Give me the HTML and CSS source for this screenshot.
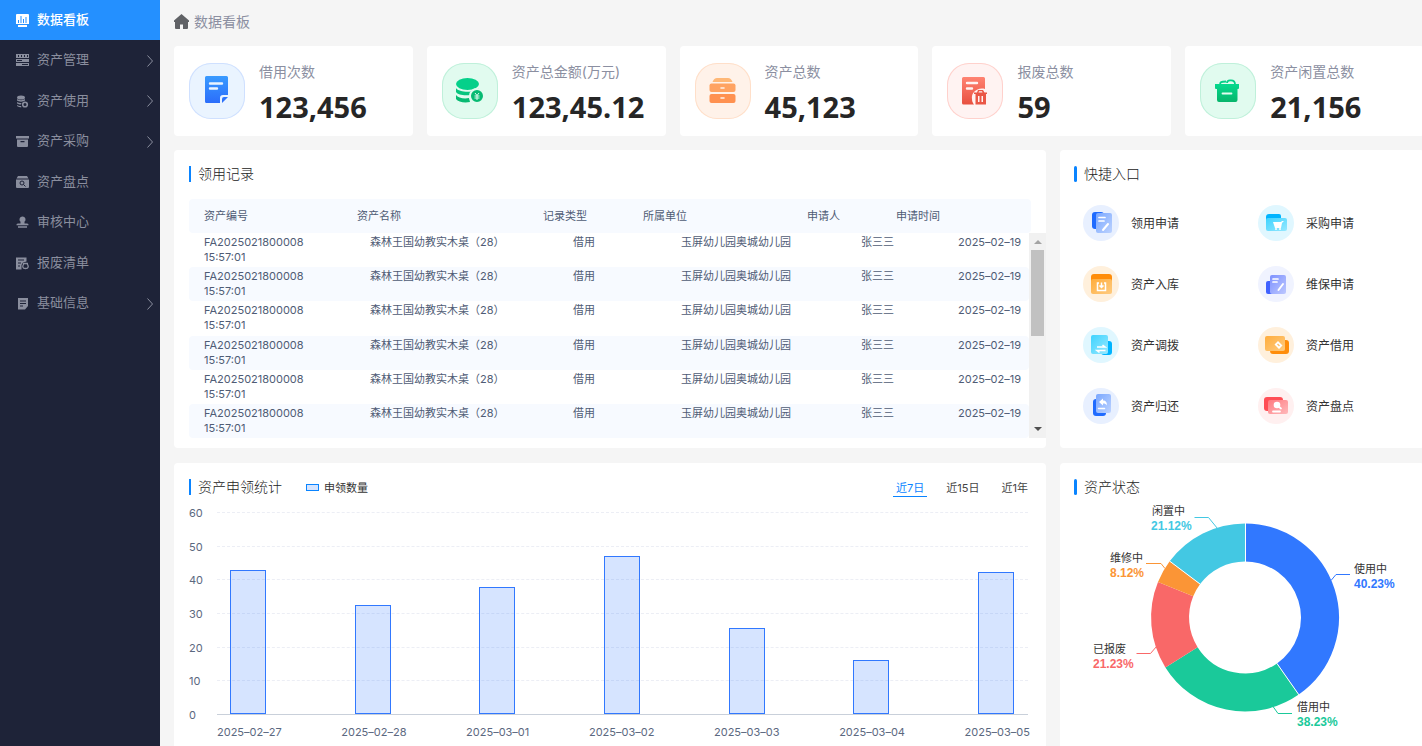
FILE: index.html
```html
<!DOCTYPE html>
<html lang="zh-CN">
<head>
    <meta charset="UTF-8">
    <meta name="viewport" content="width=device-width, initial-scale=1.0">
    <title>数据看板</title>
    <link rel="stylesheet" href="styles.css">
</head>
<body>

    <!-- Side menu -->
    <nav class="sidebar">
        <a class="menu-item active" href="#">
            <svg class="menu-icon" viewBox="0 0 13 13"><path fill="currentColor" fill-rule="evenodd" d="M0 1a1 1 0 0 1 1-1h11a1 1 0 0 1 1 1v9H0zM2 6v3h1V6zM4.500 2v7h1V2zM7 5v4h1V5zM9.500 3v6h1V3zM2 11h9v2H2z"/></svg>
            <span>数据看板</span>
        </a>
        <a class="menu-item" href="#">
            <svg class="menu-icon" viewBox="0 0 13 13"><path fill="currentColor" fill-rule="evenodd" d="M0 0h13v4H0zM2 1v2h1V1zM5 1v2h1V1zM8 1v2h1V1zM11 1v2h1V1zM0 5h13v3H0zM1 6v1h5V6zM0 9h13v3H0zM6 10v1h6v-1z"/></svg>
            <span>资产管理</span>
            <svg class="chevron" viewBox="0 0 6 12"><path d="M.5.5 5.500 6 .5 11.500"/></svg>
        </a>
        <a class="menu-item" href="#">
            <svg class="menu-icon" viewBox="0 0 13 13"><g fill="currentColor"><ellipse cx="5" cy="2.500" rx="4" ry="2"/><path d="M1 4c2 1.500 6 1.500 8 0v1.500C7 7 3 7 1 5.500zM1 7c1 .8 2.500 1 4.500 1L5 9.500C3.500 9.500 2 9 1 8.500zM1 10c1 .7 2.500 1 4 1l.5 1.200C4 12.200 2 12 1 11z"/></g><circle cx="9" cy="9.500" r="2.300" fill="none" stroke="currentColor" stroke-width="1.600"/></svg>
            <span>资产使用</span>
            <svg class="chevron" viewBox="0 0 6 12"><path d="M.5.5 5.500 6 .5 11.500"/></svg>
        </a>
        <a class="menu-item" href="#">
            <svg class="menu-icon" viewBox="0 0 13 13"><path fill="currentColor" fill-rule="evenodd" d="M0 1h13v2.500H0zM1 4.500h11V11a1 1 0 0 1-1 1H2a1 1 0 0 1-1-1zM4.500 6v1.200h4V6z"/></svg>
            <span>资产采购</span>
            <svg class="chevron" viewBox="0 0 6 12"><path d="M.5.5 5.500 6 .5 11.500"/></svg>
        </a>
        <a class="menu-item" href="#">
            <svg class="menu-icon" viewBox="0 0 13 13"><path fill="currentColor" d="M2 0h9l1.500 2.500H.5zM0 3.500h13V11a1 1 0 0 1-1 1H1a1 1 0 0 1-1-1z"/><g fill="none" stroke="#1e2338"><circle cx="6" cy="7" r="2"/><path d="m7.500 8.500 2 2"/></g></svg>
            <span>资产盘点</span>
        </a>
        <a class="menu-item" href="#">
            <svg class="menu-icon" viewBox="0 0 13 13"><path fill="currentColor" d="M6.500.5a3 3 0 0 1 2 5.300V7.500H11a1.500 1.500 0 0 1 1.500 1.800H.5A1.500 1.500 0 0 1 2 7.500h2.500V5.800a3 3 0 0 1 2-5.300zM2 10.300h9v1.500H2z"/></svg>
            <span>审核中心</span>
        </a>
        <a class="menu-item" href="#">
            <svg class="menu-icon" viewBox="0 0 13 13"><path fill="currentColor" fill-rule="evenodd" d="M0 .5h10.500v4L7 5.500 5.500 8v4.500H0zM2 2.500v1h6v-1zM2 5.500v1h3v-1zM2 8.500v1h2v-1z"/><path d="M7 6.500h5M8 6.500c-2 3-1.500 5 1.500 5s3.500-2 1.500-5" fill="none" stroke="currentColor" stroke-width="1.300"/></svg>
            <span>报废清单</span>
        </a>
        <a class="menu-item" href="#">
            <svg class="menu-icon" viewBox="0 0 13 13"><path fill="currentColor" fill-rule="evenodd" d="M2 1h10v8l-3 3.500H2zM4 3.500v1h6v-1zM4 6v1h6V6zM4 8.500v1h3v-1z"/></svg>
            <span>基础信息</span>
            <svg class="chevron" viewBox="0 0 6 12"><path d="M.5.5 5.500 6 .5 11.500"/></svg>
        </a>
    </nav>

    <main class="main">
        <header class="page-header">
            <svg class="home-icon" viewBox="0 0 15 15"><path fill="#606266" d="M7.500 0 15 6.500V8h-1v6a1 1 0 0 1-1 1H9v-4.500H6V15H2a1 1 0 0 1-1-1V8H0V6.500z"/></svg>
            <span>数据看板</span>
        </header>

        <!-- Totals -->
        <section class="stats">
            <div class="stat">
                <svg class="stat-icon blue" viewBox="0 0 56 56">
                    <defs><linearGradient id="gBlue" x2="0" y2="1"><stop stop-color="#3a9bff"/><stop offset="1" stop-color="#2b6dfb"/></linearGradient></defs>
                    <path fill="url(#gBlue)" d="M17.500 13h20a1.500 1.500 0 0 1 1.500 1.500V32h-5a3 3 0 0 0-3 3v5H17.500a1.500 1.500 0 0 1-1.500-1.500v-24a1.500 1.500 0 0 1 1.500-1.500zM33 40v-4a2 2 0 0 1 2-2h4z"/>
                    <path d="M21 20.500h12M21 25.500h7" stroke="#eaf4ff" stroke-width="2.400" stroke-linecap="round"/>
                </svg>
                <div class="stat-text">
                    <p class="stat-label">借用次数</p>
                    <p class="stat-value">123,456</p>
                </div>
            </div>
            <div class="stat">
                <svg class="stat-icon green" viewBox="0 0 56 56">
                    <defs><linearGradient id="gGreen" x2="0" y2="1"><stop stop-color="#05d98e"/><stop offset="1" stop-color="#07b56b"/></linearGradient></defs>
                    <ellipse cx="25.500" cy="21" rx="11.500" ry="6" fill="#05d08a"/>
                    <path fill="#07c57e" d="M14 25c3 5 20 5 23 0v3c-3 5-20 6-23 1z"/>
                    <path fill="#07ba72" d="M14 32c2 3 8 4 13 3l1 4c-6 1-12 0-14-3z"/>
                    <circle cx="35" cy="33" r="7" fill="#07ba72" stroke="#e1fbef" stroke-width="2"/>
                    <path d="m33 30 2 2.500 2-2.500M32.500 33h5M32.500 35h5M35 32.500V37" fill="none" stroke="#e1fbef"/>
                </svg>
                <div class="stat-text">
                    <p class="stat-label">资产总金额(万元)</p>
                    <p class="stat-value">123,45.12</p>
                </div>
            </div>
            <div class="stat">
                <svg class="stat-icon orange" viewBox="0 0 56 56">
                    <path fill="#ffb877" d="M17.500 19c1-2.500 2.500-4 4.500-4h11c2 0 3.500 1.500 4.500 4z"/>
                    <rect x="14.500" y="20.500" width="26" height="8.500" rx="2" fill="#ffa362"/>
                    <rect x="14.500" y="31" width="26" height="9" rx="2" fill="#ff9150"/>
                    <path d="M26 25h3M26 35h3" stroke="#fff2e9" stroke-width="1.600" stroke-linecap="round"/>
                </svg>
                <div class="stat-text">
                    <p class="stat-label">资产总数</p>
                    <p class="stat-value">45,123</p>
                </div>
            </div>
            <div class="stat">
                <svg class="stat-icon red" viewBox="0 0 56 56">
                    <defs><linearGradient id="gRed" x2="0" y2="1"><stop stop-color="#ff8372"/><stop offset="1" stop-color="#e8503f"/></linearGradient></defs>
                    <path fill="url(#gRed)" d="M16.500 14h20a1.500 1.500 0 0 1 1.500 1.500V26c-8-2-14 4-13 10 0 3 1 4 2 5.500H16.500A1.500 1.500 0 0 1 15 40V15.500a1.500 1.500 0 0 1 1.500-1.500z"/>
                    <path d="M20 20h10M20 25.500h5" stroke="#fff3f2" stroke-width="2.400" stroke-linecap="round"/>
                    <path fill="#ea5746" fill-rule="evenodd" d="M30 29.500 31 27h5l1.500 2.500H40V31h-1v10.500H28.500V31H27v-1.500zm1.500 0h4L35 28.300h-3zM31 33v6h1.500v-6zM34.500 33v6H36v-6z"/>
                </svg>
                <div class="stat-text">
                    <p class="stat-label">报废总数</p>
                    <p class="stat-value">59</p>
                </div>
            </div>
            <div class="stat">
                <svg class="stat-icon green" viewBox="0 0 56 56">
                    <path d="M20 22c0-3 1-3.500 6-3.500M27 20c0-2 1-2.700 3-2.700h1c3 0 4 1 4 4" fill="none" stroke="#06d08a" stroke-width="1.800"/>
                    <path fill="url(#gGreen)" d="M15 21h24v4a1 1 0 0 1-1 1h-.5v11a2 2 0 0 1-2 2H19a2 2 0 0 1-2-2V26h-1a1 1 0 0 1-1-1z"/>
                    <path d="M22.500 30.500h9" stroke="#e1fbef" stroke-width="1.800" stroke-linecap="round"/>
                </svg>
                <div class="stat-text">
                    <p class="stat-label">资产闲置总数</p>
                    <p class="stat-value">21,156</p>
                </div>
            </div>
        </section>

        <div class="panels">
            <!-- Records -->
            <section class="card records">
                <div class="card-head"><h2>领用记录</h2></div>
                <div class="record-wrap">
                    <table class="record-table">
                        <thead>
                            <tr><th>资产编号</th><th>资产名称</th><th>记录类型</th><th>所属单位</th><th>申请人</th><th>申请时间</th></tr>
                        </thead>
                        <tbody>
                            <tr><td>FA2025021800008</td><td>森林王国幼教实木桌（28）</td><td>借用</td><td>玉屏幼儿园奥城幼儿园</td><td>张三三</td><td>2025–02–19</td><td>15:57:01</td></tr>
                            <tr><td>FA2025021800008</td><td>森林王国幼教实木桌（28）</td><td>借用</td><td>玉屏幼儿园奥城幼儿园</td><td>张三三</td><td>2025–02–19</td><td>15:57:01</td></tr>
                            <tr><td>FA2025021800008</td><td>森林王国幼教实木桌（28）</td><td>借用</td><td>玉屏幼儿园奥城幼儿园</td><td>张三三</td><td>2025–02–19</td><td>15:57:01</td></tr>
                            <tr><td>FA2025021800008</td><td>森林王国幼教实木桌（28）</td><td>借用</td><td>玉屏幼儿园奥城幼儿园</td><td>张三三</td><td>2025–02–19</td><td>15:57:01</td></tr>
                            <tr><td>FA2025021800008</td><td>森林王国幼教实木桌（28）</td><td>借用</td><td>玉屏幼儿园奥城幼儿园</td><td>张三三</td><td>2025–02–19</td><td>15:57:01</td></tr>
                            <tr><td>FA2025021800008</td><td>森林王国幼教实木桌（28）</td><td>借用</td><td>玉屏幼儿园奥城幼儿园</td><td>张三三</td><td>2025–02–19</td><td>15:57:01</td></tr>
                        </tbody>
                    </table>
                    <div class="scrollbar">
                        <span class="arrow up"></span>
                        <span class="thumb"></span>
                        <span class="arrow down"></span>
                    </div>
                </div>
            </section>

            <!-- Shortcuts -->
            <section class="card side">
                <div class="card-head"><h2>快捷入口</h2></div>
                <div class="shortcuts">
                    <a class="shortcut" href="#">
                        <svg class="c-blue" viewBox="0 0 36 36">
                            <defs><linearGradient id="qBlue" x2="1" y2="1"><stop stop-color="#79a7ff"/><stop offset="1" stop-color="#bdd3ff"/></linearGradient></defs>
                            <rect x="9" y="7" width="12" height="17" rx="3" fill="#1f6bff"/><rect x="13" y="8" width="16" height="20" rx="2" fill="url(#qBlue)"/>
                            <path d="M16 12.500h6M16 16h5" stroke="#fff" stroke-width="1.700" stroke-linecap="round"/><path d="m20 25 5-6" stroke="#fff" stroke-width="2" stroke-linecap="round"/>
                        </svg>
                        <span>领用申请</span>
                    </a>
                    <a class="shortcut" href="#">
                        <svg class="c-cyan" viewBox="0 0 36 36">
                            <defs><linearGradient id="qCyan" x2="1" y2="1"><stop stop-color="#3ed3ff"/><stop offset="1" stop-color="#96e8ff"/></linearGradient></defs>
                            <path fill="#00b4ff" d="M8 12a3 3 0 0 1 3-3h10a2 2 0 0 1 2 2v6H8z"/><rect x="8" y="13" width="21" height="13" rx="2" fill="url(#qCyan)"/>
                            <path fill="#fff" d="M15 17h8l1-1h2l-2 2-1 5h-6z"/><circle cx="18" cy="24" r="1" fill="#fff"/><circle cx="22" cy="24" r="1" fill="#fff"/>
                        </svg>
                        <span>采购申请</span>
                    </a>
                    <a class="shortcut" href="#">
                        <svg class="c-orange" viewBox="0 0 36 36">
                            <defs><linearGradient id="qOrange" x2="1" y2="1"><stop stop-color="#ffad3c"/><stop offset="1" stop-color="#ffcb7f"/></linearGradient></defs>
                            <rect x="8" y="8" width="21" height="19" rx="3" fill="#ff8d0a"/><rect x="8" y="13" width="21" height="15" rx="2" fill="url(#qOrange)"/>
                            <path d="M16 17h-1.500v7.500h8V17H21M18.500 16.500V21M16.500 19.500l2 2 2-2" fill="none" stroke="#fff" stroke-width="1.500"/>
                        </svg>
                        <span>资产入库</span>
                    </a>
                    <a class="shortcut" href="#">
                        <svg class="c-violet" viewBox="0 0 36 36">
                            <defs><linearGradient id="qViolet" x2="1" y2="1"><stop stop-color="#7d91ff"/><stop offset="1" stop-color="#bdc8ff"/></linearGradient></defs>
                            <rect x="8" y="15" width="12" height="13" rx="2" fill="#4062ff"/><rect x="12" y="9" width="16" height="19" rx="2" fill="url(#qViolet)"/>
                            <path d="M15 13h5M15 16h4" stroke="#fff" stroke-width="1.700" stroke-linecap="round"/><path d="m20.500 24 4.500-6" stroke="#fff" stroke-width="2" stroke-linecap="round"/>
                        </svg>
                        <span>维保申请</span>
                    </a>
                    <a class="shortcut" href="#">
                        <svg class="c-cyan" viewBox="0 0 36 36">
                            <rect x="18" y="14" width="11" height="14" rx="3" fill="#00b4ff"/><rect x="8" y="8" width="17" height="19" rx="2" fill="url(#qCyan)"/>
                            <path d="M14 20h8l-2.500-2M22.500 23.500H14l2.500 2" fill="none" stroke="#fff" stroke-width="1.600"/>
                        </svg>
                        <span>资产调拨</span>
                    </a>
                    <a class="shortcut" href="#">
                        <svg class="c-orange" viewBox="0 0 36 36">
                            <rect x="12" y="13" width="19" height="14" rx="3" fill="#ff8d0a"/><rect x="7" y="9" width="20" height="15" rx="2" fill="url(#qOrange)"/>
                            <path fill="#fff" fill-rule="evenodd" d="m20 14 4.500 4.500L21 22l-4.500-4.500zm0 2.500-1 1 2 2 1-1z"/>
                        </svg>
                        <span>资产借用</span>
                    </a>
                    <a class="shortcut" href="#">
                        <svg class="c-blue" viewBox="0 0 36 36">
                            <rect x="10" y="11" width="13" height="17" rx="3" fill="#1f6bff"/><rect x="13" y="6" width="15" height="19" rx="2" fill="url(#qBlue)"/>
                            <path fill="#fff" d="m16 14 4-3.500v2c3 0 4 2 4 5-1-1.500-2-2-4-2v2z"/><path d="M15.500 20.500h6" stroke="#fff" stroke-width="1.500" stroke-linecap="round"/>
                        </svg>
                        <span>资产归还</span>
                    </a>
                    <a class="shortcut" href="#">
                        <svg class="c-red" viewBox="0 0 36 36">
                            <defs><linearGradient id="qRed" x2="1" y2="1"><stop stop-color="#ff7b80"/><stop offset="1" stop-color="#ffb9bb"/></linearGradient></defs>
                            <rect x="6" y="9" width="19" height="14" rx="3" fill="#ff4d55"/><rect x="10" y="12" width="20" height="14" rx="2" fill="url(#qRed)"/>
                            <circle cx="19" cy="17" r="3.300" fill="#fff"/><path d="m20 18 3 2.500M15 23.500h7" stroke="#fff" stroke-width="1.800" stroke-linecap="round"/>
                        </svg>
                        <span>资产盘点</span>
                    </a>
                </div>
            </section>

            <!-- Bar chart -->
            <section class="card">
                <div class="card-head">
                    <h2>资产申领统计</h2>
                    <span class="legend">申领数量</span>
                    <div class="tabs">
                        <button class="tab active" type="button">近7日</button>
                        <button class="tab" type="button">近15日</button>
                        <button class="tab" type="button">近1年</button>
                    </div>
                </div>
                <div class="chart">
                    <div class="y-axis">
                        <span>60</span><span>50</span><span>40</span><span>30</span><span>20</span><span>10</span><span>0</span>
                    </div>
                    <div class="plot">
                        <div class="grid-lines"><i></i><i></i><i></i><i></i><i></i><i></i><i></i></div>
                        <div class="bars">
                            <div class="bar" style="height: 71.3%"></div>
                            <div class="bar" style="height: 54%"></div>
                            <div class="bar" style="height: 62.9%"></div>
                            <div class="bar" style="height: 78.2%"></div>
                            <div class="bar" style="height: 42.6%"></div>
                            <div class="bar" style="height: 26.7%"></div>
                            <div class="bar" style="height: 70.3%"></div>
                        </div>
                    </div>
                    <div class="x-axis">
                        <span>2025–02–27</span><span>2025–02–28</span><span>2025–03–01</span><span>2025–03–02</span><span>2025–03–03</span><span>2025–03–04</span><span>2025–03–05</span>
                    </div>
                </div>
            </section>

            <!-- Donut chart -->
            <section class="card side">
                <div class="card-head"><h2>资产状态</h2></div>
                <svg class="donut" viewBox="0 0 362 246">
                    <g fill="none" stroke-width="38">
                        <path stroke="#3178ff" d="M185 42.500A75 75 0 0 1 227.900 179"/>
                        <path stroke="#1ac99a" d="M227.900 179A75 75 0 0 1 121.500 157.300"/>
                        <path stroke="#f96868" d="M121.500 157.300A75 75 0 0 1 115.600 89.200"/>
                        <path stroke="#fb9536" d="M115.600 89.200A75 75 0 0 1 124.900 72.700"/>
                        <path stroke="#43c8e3" d="M124.900 72.700A75 75 0 0 1 185 42.500"/>
                    </g>
                    <path stroke="#fff" d="M185.500 23v39M217 163.500l22 31.500M109.500 61l30.500 23"/>
                    <g fill="none">
                        <path stroke="#3178ff" d="M290 74.500h-14l-5 6"/>
                        <path stroke="#1ac99a" d="M232 213.500h-14l-5-7"/>
                        <path stroke="#f96868" d="M76.500 153.500h14l6-7"/>
                        <path stroke="#fb9536" d="M86 63.500h15l4 5"/>
                        <path stroke="#43c8e3" d="M134.500 17.500h14l9 11"/>
                    </g>
                    <g class="donut-name">
                        <text x="294" y="73">使用中</text>
                        <text x="237" y="211">借用中</text>
                        <text x="33" y="153">已报废</text>
                        <text x="50" y="62">维修中</text>
                        <text x="92" y="15">闲置中</text>
                    </g>
                    <g class="donut-value">
                        <text x="294" y="88" fill="#3178ff">40.23%</text>
                        <text x="237" y="226" fill="#1ac99a">38.23%</text>
                        <text x="33" y="168" fill="#f96868">21.23%</text>
                        <text x="50" y="77" fill="#fb9536">8.12%</text>
                        <text x="91" y="30" fill="#43c8e3">21.12%</text>
                    </g>
                </svg>
            </section>
        </div>
    </main>

</body>
</html>
```
FILE: styles.css
```css
* {
    box-sizing: border-box;
}

body {
    display: flex;
    height: 100vh;
    margin: 0;
    overflow: hidden;
    background-color: #f5f5f5;
    font-family: Inter, "Noto Sans CJK SC", sans-serif;
    font-size: 11px;
    font-weight: 400;
    color: #333;
}

a {
    color: inherit;
    text-decoration: none;
}

h2, p {
    margin: 0;
    font-weight: 400;
}

/* Side menu */
.sidebar {
    flex: 0 0 160px;
    background-color: #1e2338;
}

.menu-item {
    display: flex;
    align-items: center;
    height: 40px;
    padding: 0 7px 0 16px;
    font-size: 13px;
    color: #8a8e9e;
}

.menu-item:nth-child(even) {
    height: 41px;
}

.menu-item.active {
    background-color: #2490ff;
    font-weight: 500;
    color: #fff;
}

.menu-item span {
    padding-bottom: 4px;
}

.menu-icon {
    width: 13px;
    height: 13px;
    margin-right: 8px;
}

.chevron {
    width: 6px;
    height: 12px;
    margin-left: auto;
    fill: none;
    stroke: #8a8e9e;
}

/* Page area, the right column runs to the window edge */
.main {
    flex: 1;
    min-width: 0;
    padding-left: 14px;
    overflow: hidden;
}

.page-header {
    display: flex;
    align-items: center;
    gap: 5px;
    height: 46px;
    padding-bottom: 3px;
    font-size: 14px;
    color: #8b8fa1;
}

.page-header span {
    padding-bottom: 2px;
}

.home-icon {
    width: 15px;
    height: 15px;
}

.stats {
    display: grid;
    grid-template-columns: repeat(5, 1fr);
    gap: 14px;
    margin: 0 -2px 14px 0;
}

.stat {
    display: flex;
    align-items: center;
    gap: 14px;
    height: 90px;
    padding-left: 15px;
    border-radius: 4px;
    background-color: #fff;
}

.stat-icon {
    width: 56px;
    height: 56px;
    border-radius: 22px;
}

.stat-icon.blue {
    background-color: #eaf4ff;
    box-shadow: inset 0 0 0 1px #cfe0ff;
}

.stat-icon.green {
    background-color: #e1fbef;
    box-shadow: inset 0 0 0 1px #bff0da;
}

.stat-icon.orange {
    background-color: #fff2e9;
    box-shadow: inset 0 0 0 1px #ffdfc9;
}

.stat-icon.red {
    background-color: #fff3f2;
    box-shadow: inset 0 0 0 1px #ffd1cc;
}

.stat-text {
    padding-top: 7px;
}

.stat-label {
    font-size: 14px;
    line-height: 20px;
    color: #8b8fa1;
}

.stat-value {
    margin-top: 5px;
    font-family: "Noto Sans", sans-serif;
    font-size: 29px;
    font-weight: 700;
    line-height: 40px;
    color: #262626;
}

.panels {
    display: grid;
    grid-template-columns: 872fr 364fr;
    gap: 15px 14px;
    margin-right: -2px;
}

.card {
    min-width: 0;
    padding: 14px 15px 10px;
    border-radius: 4px;
    background-color: #fff;
}

.card.side {
    padding-left: 14px;
}

.card-head {
    display: flex;
    align-items: center;
    height: 20px;
    margin-bottom: 15px;
}

.card-head h2 {
    display: flex;
    align-items: center;
    gap: 7px;
    font-size: 14px;
    font-weight: 300;
    line-height: 20px;
    color: #222;
}

.card-head h2::before {
    content: "";
    width: 2px;
    height: 16px;
    background-color: #0a84ff;
}

.side .card-head h2::before {
    width: 3px;
    border-radius: 2px;
}

/* Records */
.record-wrap {
    display: grid;
    grid-template-columns: 1fr 17px;
    margin-right: -15px;
}

.record-table {
    display: block;
    color: #4f5c75;
}

.record-table thead,
.record-table tbody {
    display: block;
}

.record-table tr {
    display: grid;
    padding-left: 15px;
    border-radius: 4px;
}

.record-table th,
.record-table td {
    padding: 0;
    font-weight: 400;
    line-height: 15px;
    text-align: left;
    white-space: nowrap;
}

.record-table thead tr {
    grid-template-columns: 153fr 186fr 100fr 164fr 89fr 135fr;
    align-items: center;
    height: 34px;
    margin-right: -2px;
    background-color: #f7faff;
}

.record-table tbody {
    display: flex;
    flex-direction: column;
    height: 205px;
}

.record-table tbody tr {
    flex: 1;
    grid-template-columns: 166fr 203fr 108fr 180fr 97fr 71fr;
    align-content: start;
    padding-top: 2px;
}

.record-table tbody tr:nth-child(even) {
    background-color: #f7faff;
}

.scrollbar {
    display: flex;
    flex-direction: column;
    align-items: center;
    justify-content: space-between;
    height: 205px;
    margin-top: 34px;
    padding: 7px 0;
    background-color: #f1f1f1;
}

.thumb {
    width: 13px;
    height: 86px;
    margin: 6px 0 auto;
    background-color: #c1c1c1;
}

.arrow {
    border: 4px solid transparent;
}

.arrow.up {
    border-top: 0;
    border-bottom-color: #a3a3a3;
}

.arrow.down {
    border-bottom: 0;
    border-top-color: #505050;
}

/* Shortcuts */
.shortcuts {
    display: grid;
    grid-template-columns: 1fr 1fr;
    gap: 25px 0;
    margin-right: -24px;
    padding: 6px 0 0 9px;
}

.shortcut {
    display: flex;
    align-items: center;
    gap: 12px;
    font-size: 12px;
}

.shortcut span {
    padding-bottom: 2px;
}

.shortcut svg {
    width: 36px;
    height: 36px;
    border-radius: 50%;
}

.c-blue {
    background-color: #e8f0ff;
}

.c-cyan {
    background-color: #e0f7ff;
}

.c-orange {
    background-color: #fff0dc;
}

.c-violet {
    background-color: #f0f3ff;
}

.c-red {
    background-color: #fff0f0;
}

/* Bar chart */
.legend {
    display: flex;
    align-items: center;
    gap: 5px;
    margin-left: 24px;
}

.legend::before {
    content: "";
    width: 11px;
    height: 5px;
    border: 1px solid #0a84ff;
    background-color: #d5e4ff;
}

.tabs {
    display: flex;
    gap: 16px;
    margin-left: auto;
}

.tab {
    height: 20px;
    padding: 0 3px;
    border: 0;
    border-bottom: 1px solid transparent;
    background: none;
    font: inherit;
    color: #444;
    cursor: pointer;
}

.tab.active {
    border-bottom-color: #0a84ff;
    color: #0a84ff;
}

.chart {
    display: grid;
    grid-template-columns: 28px 1fr;
    padding-right: 3px;
    color: #5b6880;
}

.y-axis {
    display: flex;
    flex-direction: column;
    justify-content: space-between;
    margin: -6px 0 -8px;
    line-height: 15px;
}

.plot {
    display: grid;
    height: 203px;
}

.grid-lines,
.bars {
    display: flex;
    grid-area: 1 / 1;
    justify-content: space-between;
}

.grid-lines {
    flex-direction: column;
}

.grid-lines i {
    border-top: 1px dashed #eceef5;
}

.grid-lines i:last-child {
    border-top: 1px solid #c9d0da;
}

.bars {
    align-items: flex-end;
    padding: 0 14px 1px 13px;
}

.bar {
    width: 36px;
    border: 1px solid #3178ff;
    background-color: rgba(49, 120, 255, 0.2);
}

.x-axis {
    display: flex;
    grid-column: 2;
    justify-content: space-between;
    margin: 10px -2px 0 0;
    line-height: 15px;
}

/* Donut chart */
.donut {
    display: block;
    width: 362px;
    height: 246px;
    margin: -12px 0 0 -14px;
}

.donut-name {
    fill: #333;
}

.donut-value {
    font-family: "Liberation Sans", sans-serif;
    font-size: 12px;
    font-weight: 700;
}
```
